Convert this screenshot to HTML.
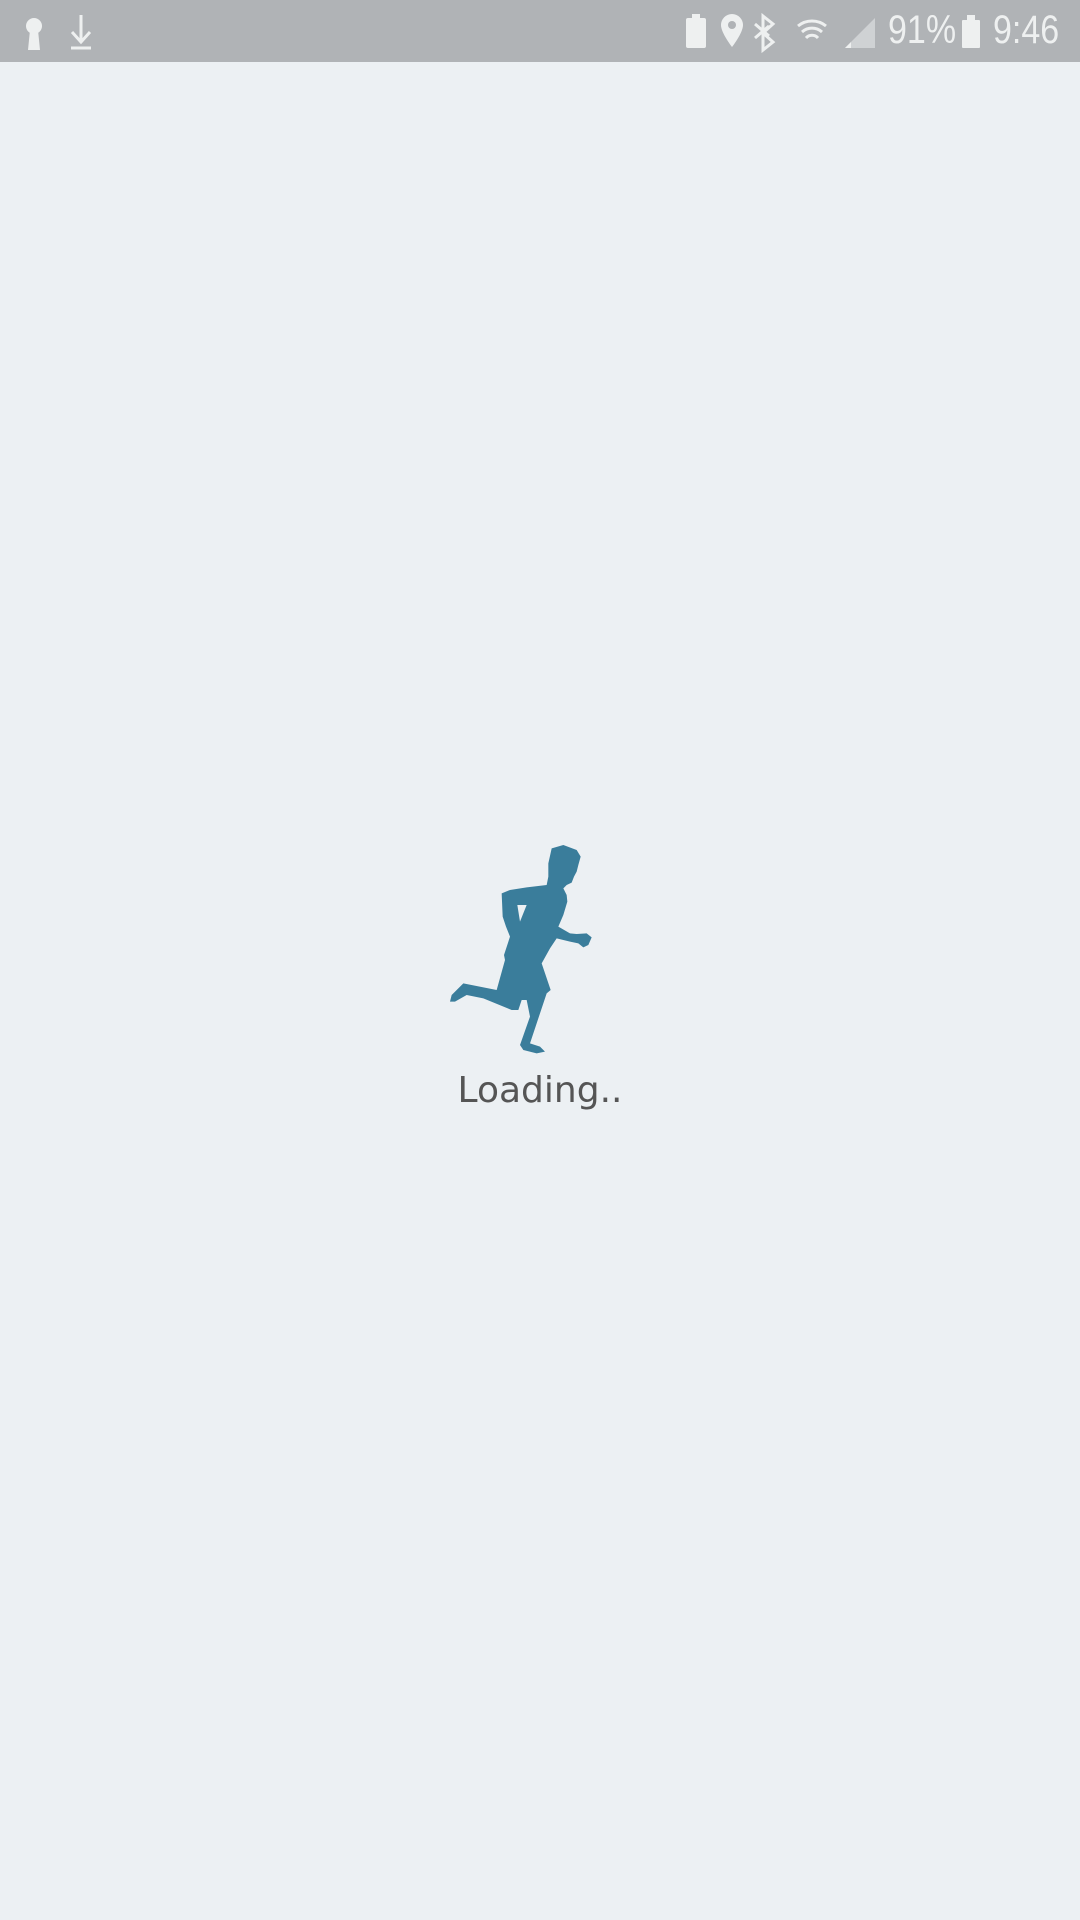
<!DOCTYPE html>
<html><head><meta charset="utf-8"><style>
html,body{margin:0;padding:0;width:1080px;height:1920px;background:#ecf0f3;overflow:hidden;font-family:"Liberation Sans",sans-serif}
.sb{position:absolute;left:0;top:0;width:1080px;height:62px;background:#b0b3b6}
.t{position:absolute;color:#eef0f0;font-size:40px;top:8px;transform:scaleX(0.85);transform-origin:left top}
.load{position:absolute;left:0;width:1080px;top:1070px;text-align:center;font-size:36px;color:#555;font-family:"DejaVu Sans","Liberation Sans",sans-serif}
</style></head><body>
<div class="sb">
<svg width="1080" height="62" style="position:absolute;left:0;top:0" fill="#eef0f0">
<circle cx="34" cy="26" r="8"/><path d="M30 30h8l2 20h-12z"/>
<path d="M81 15v26M72 32l9 10 9-10M71 48h20" stroke="#eef0f0" stroke-width="3" fill="none"/>
<rect x="686" y="18" width="20" height="30" rx="2"/><rect x="692" y="14" width="8" height="5"/>
<path d="M732 14a11 11 0 0 1 11 11c0 8-11 22-11 22s-11-14-11-22a11 11 0 0 1 11-11z"/><circle cx="732" cy="25" r="4" fill="#b0b3b6"/>
<path d="M763 16l10 8-10 9 10 9-10 8V16zM755 24l14 12M755 38l14-12" stroke="#eef0f0" stroke-width="3" fill="none"/>
<path d="M798 26a22 22 0 0 1 28 0M802 32a15 15 0 0 1 20 0M806 38a8 8 0 0 1 12 0" stroke="#eef0f0" stroke-width="3" fill="none"/>
<path d="M845 48h30V18z" fill="#cfd2d4"/><path d="M845 48h6v-6z"/>
<rect x="962" y="20" width="18" height="28" rx="1"/><rect x="967" y="15" width="8" height="5"/>
</svg>
<div class="t" style="left:888px">91%</div>
<div class="t" style="left:993px">9:46</div>
</div>
<svg style="position:absolute;left:430px;top:830px" width="200" height="290" viewBox="0 0 600 870">
<path fill="#3a7d9b" fill-rule="evenodd" d="M365 55L400 45L440 60L452 80L445 105L440 125L432 140L425 158L410 165L400 175L410 195L412 215L400 255L385 290L420 310L440 312L470 310L485 322L475 345L460 352L445 340L420 335L380 325L360 355L335 400L362 480L350 490L340 520L300 640L330 650L345 665L320 670L280 660L270 645L300 560L290 510L275 510L265 540L245 540L160 505L110 495L75 515L60 515L65 495L100 460L200 480L225 390L222 375L240 320L228 290L218 260L215 190L240 180L290 172L350 165L355 140L355 100Z M262 225L290 225L270 275Z"/>
</svg>
<div class="load">Loading..</div>
</body></html>
